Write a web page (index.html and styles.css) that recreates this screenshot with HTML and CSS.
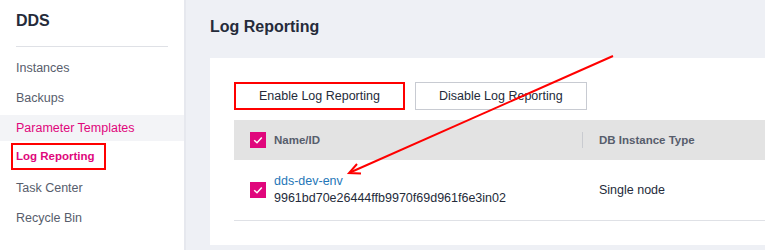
FILE: index.html
```html
<!DOCTYPE html>
<html>
<head>
  <meta charset="UTF-8">
  <title>DDS - Log Reporting</title>
  <link rel="stylesheet" href="styles.css">
</head>
<body>
  <div class="page">
    <!-- Left navigation -->
    <div class="sidebar">
      <h2 class="brand">DDS</h2>
      <div class="divider"></div>
      <ul class="menu">
        <li class="menu-item">Instances</li>
        <li class="menu-item">Backups</li>
        <li class="menu-item hover">Parameter Templates</li>
        <li class="menu-item active"><span class="marked">Log Reporting</span></li>
        <li class="menu-item">Task Center</li>
        <li class="menu-item">Recycle Bin</li>
      </ul>
    </div>

    <!-- Main content -->
    <div class="main">
      <h1 class="title">Log Reporting</h1>
      <div class="card">
        <div class="toolbar">
          <button class="btn btn-marked">Enable Log Reporting</button>
          <button class="btn">Disable Log Reporting</button>
        </div>
        <table class="grid">
          <thead>
            <tr>
              <th class="col-name">
                <div class="cell">
                  <span class="check"><svg width="16" height="16" viewBox="0 0 16 16"><polyline points="4.2,8.2 7,10.8 11.8,5.6" fill="none" stroke="#fff" stroke-width="1.5"/></svg></span>
                  <span>Name/ID</span>
                </div>
              </th>
              <th class="col-type">DB Instance Type</th>
            </tr>
          </thead>
          <tbody>
            <tr>
              <td class="col-name">
                <div class="cell">
                  <span class="check"><svg width="16" height="16" viewBox="0 0 16 16"><polyline points="4.2,8.2 7,10.8 11.8,5.6" fill="none" stroke="#fff" stroke-width="1.5"/></svg></span>
                  <div class="name">
                    <a class="link" href="#">dds-dev-env</a>
                    <div class="id">9961bd70e26444ffb9970f69d961f6e3in02</div>
                  </div>
                </div>
              </td>
              <td class="col-type">Single node</td>
            </tr>
          </tbody>
        </table>
      </div>
    </div>
  </div>

  <!-- Annotation arrow -->
  <svg class="arrow" width="765" height="250" viewBox="0 0 765 250">
    <line x1="613" y1="56" x2="350" y2="172.5" stroke="#f00" stroke-width="2"/>
    <polyline points="357,164 349,173 361,173.5" fill="none" stroke="#f00" stroke-width="2"/>
  </svg>
</body>
</html>
```

FILE: styles.css
```css
body { margin: 0; font-family: "Liberation Sans", Arial, sans-serif; font-size: 12.5px; color: #252b3a; background: #eef0f5; overflow: hidden; position: relative; height: 250px; }
.page { display: flex; height: 250px; overflow: hidden; }

.sidebar { width: 184px; flex: none; background: #fff; border-right: 2px solid #e6e8ee; }
.brand { margin: 11px 16px 0; font-size: 16px; line-height: 20px; font-weight: bold; color: #252b3a; }
.divider { margin: 15px 16px 0; height: 1px; background: #dfe1e6; }
.menu { list-style: none; margin: 8px 0 0; padding: 0; }
.menu-item { height: 26px; line-height: 26px; padding-left: 16px; margin-bottom: 4px; color: #575d6c; display: flex; align-items: center; }
.menu-item.hover { background: #f3f4f7; color: #e0077c; }
.menu-item.active { color: #e0077c; font-weight: bold; font-size: 11.5px; }
.marked { border: 2px solid #f00; line-height: 23px; padding: 0 9px 0 3px; margin: -3px 0 0 -5px; }

.main { flex: 1; min-width: 0; padding: 17px 0 0 24px; }
.title { margin: 0 0 21px; font-size: 16px; line-height: 20px; font-weight: bold; color: #252b3a; }
.card { background: #fff; padding: 24px 0 24px 24px; }

.toolbar { display: flex; gap: 10px; margin-bottom: 10px; }
.btn { height: 28px; box-sizing: border-box; padding: 0 23px; background: #fff; border: 1px solid #c8cbd2; font-family: inherit; font-size: 12.5px; color: #252b3a; }
.btn-marked { border: 2px solid #f00; }

.grid { width: 100%; border-collapse: collapse; }
.grid th { height: 40px; padding: 0; background: #e3e3e3; text-align: left; font-size: 11.5px; font-weight: bold; color: #575d6c; }
.grid td { height: 60px; padding: 0; border-bottom: 1px solid #dfe1e6; }
.col-name { width: 348px; }
.col-name .cell { display: flex; align-items: center; padding-left: 16px; }
th.col-type { position: relative; padding-left: 17px; }
th.col-type::before { content: ""; position: absolute; left: 0; top: 12px; width: 1px; height: 16px; background: #c9cbd0; }
td.col-type { padding-left: 17px; }

.check { width: 16px; height: 16px; background: #e0077c; margin-right: 8px; display: flex; flex: none; }
.name { line-height: 17px; }
.link { color: #1f77b8; text-decoration: none; }
.id { color: #252b3a; }

.arrow { position: absolute; top: 0; left: 0; pointer-events: none; }
```
